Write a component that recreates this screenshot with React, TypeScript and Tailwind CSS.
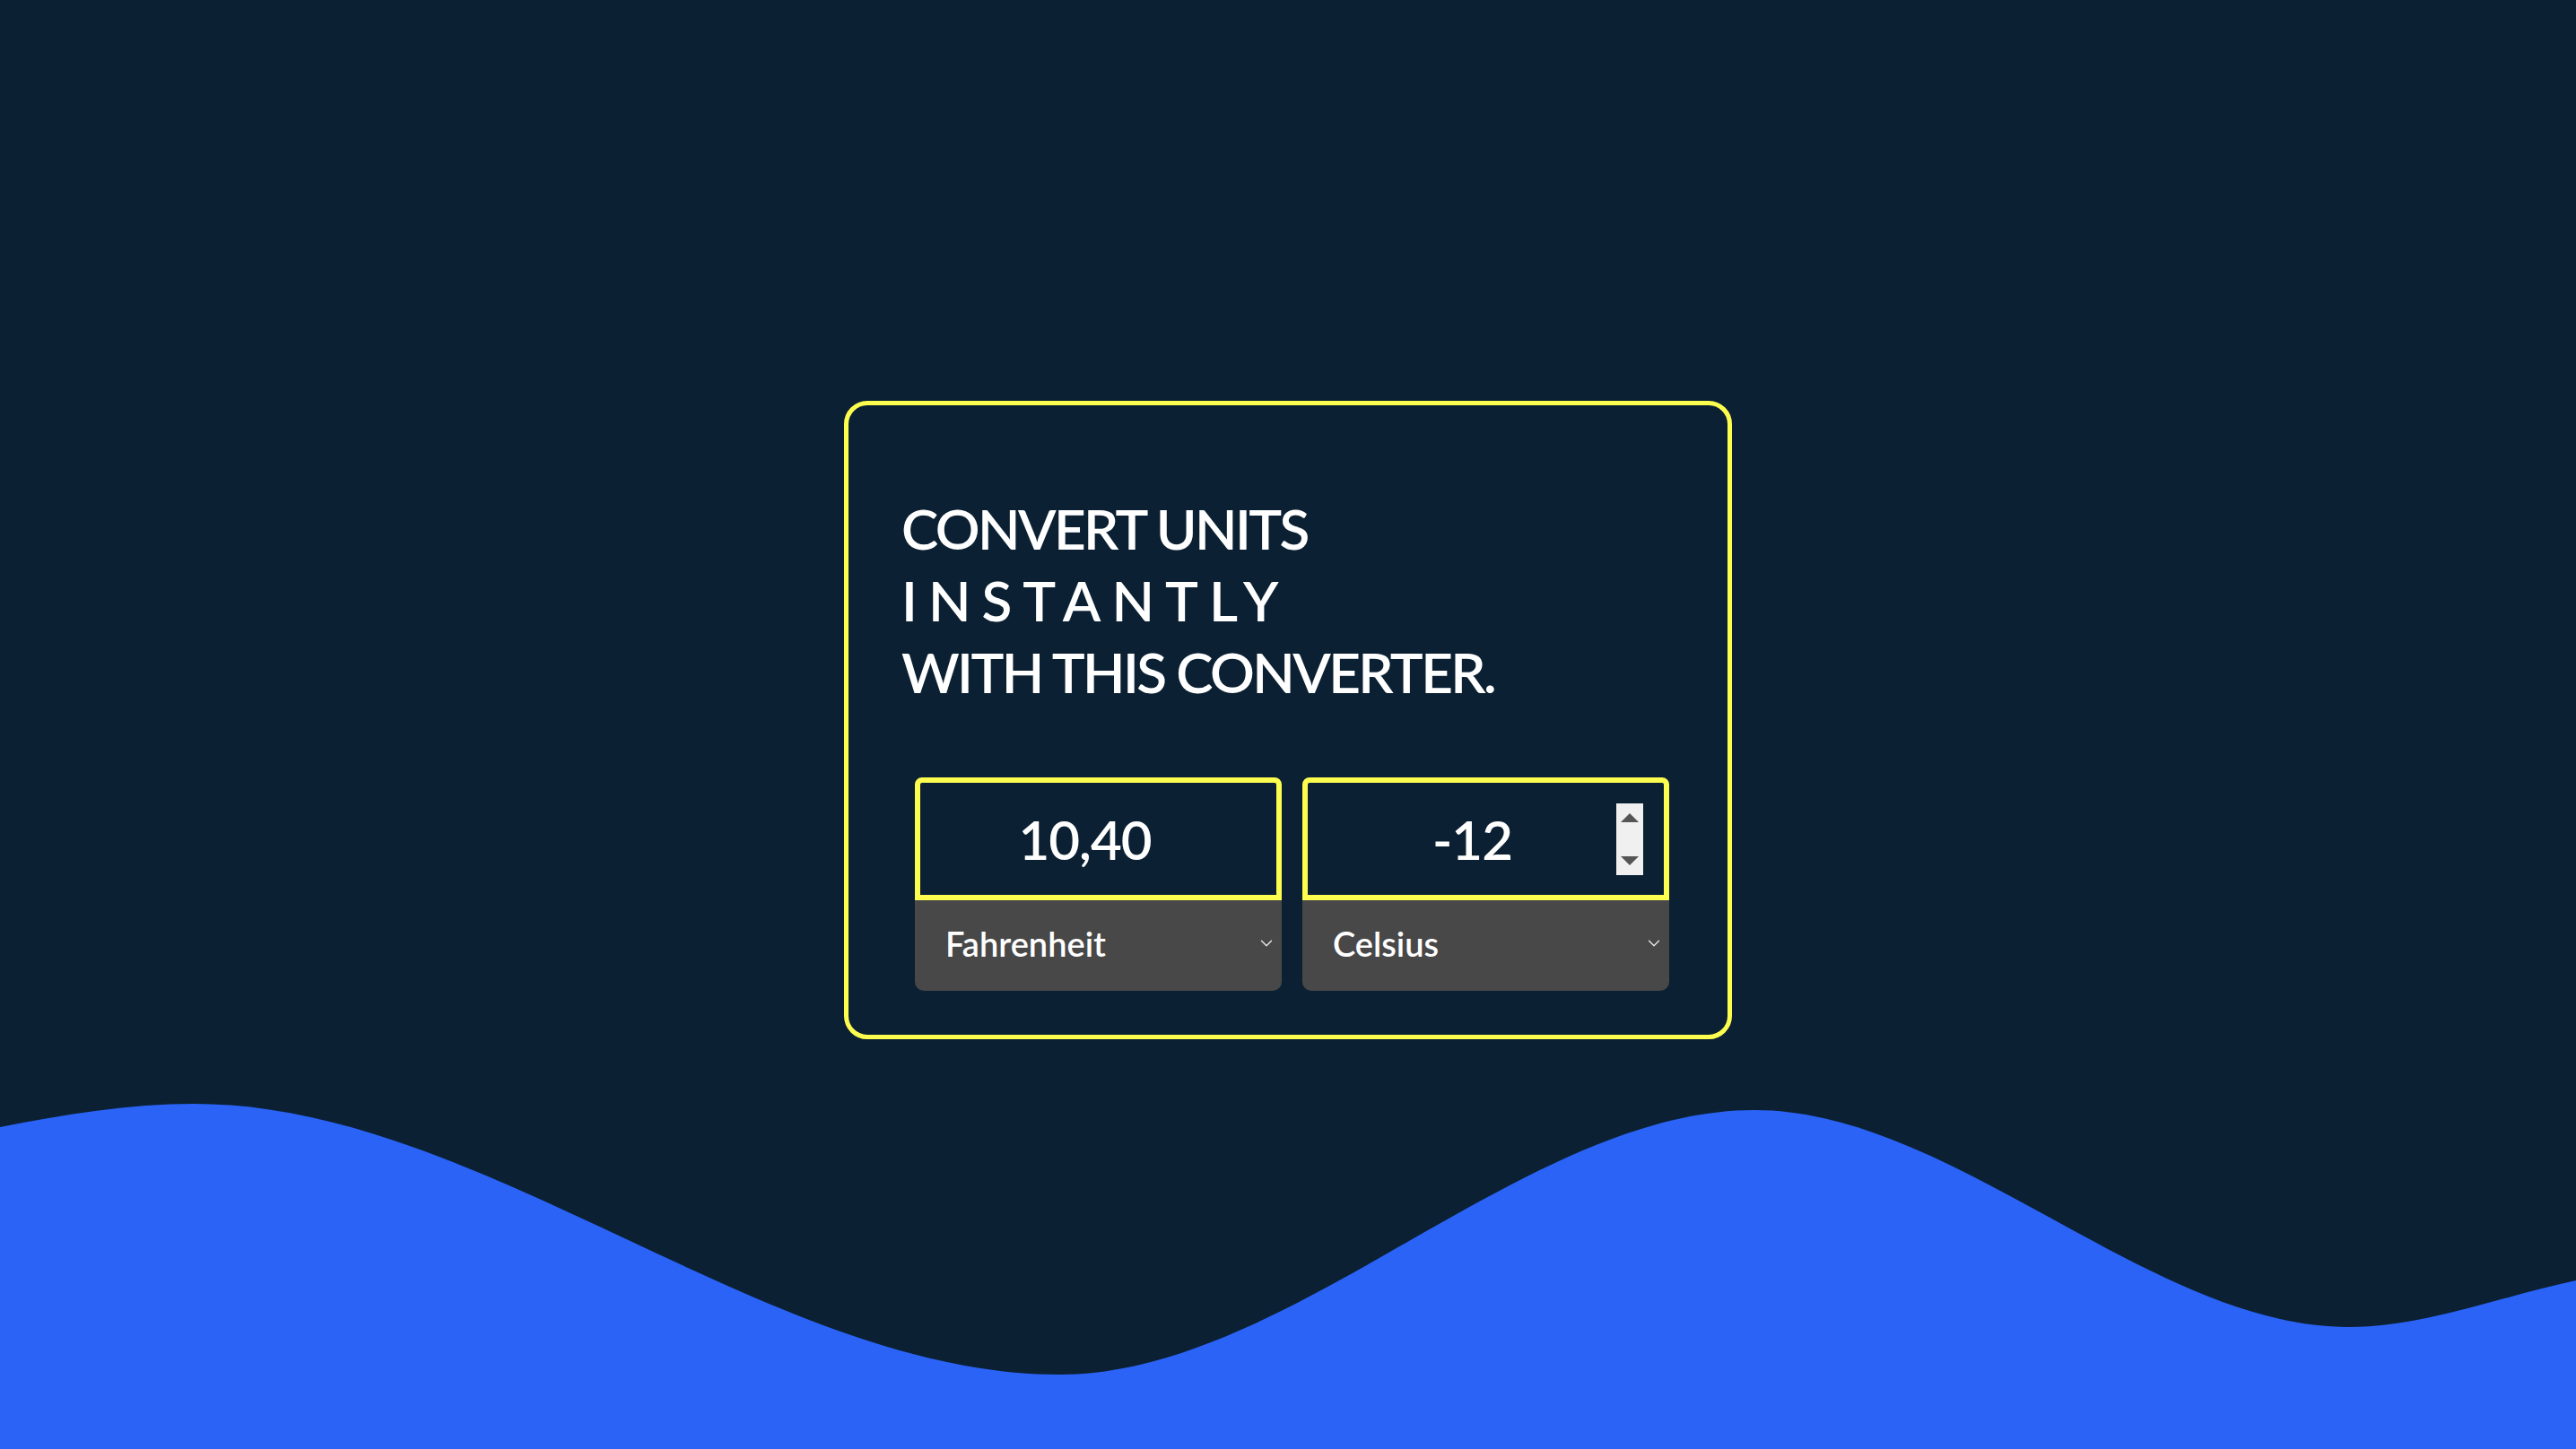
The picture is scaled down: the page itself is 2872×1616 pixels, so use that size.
import { ChevronDown } from "lucide-react";

const font = { fontFamily: "Lato, 'Noto Sans', sans-serif" };

function Wave() {
  return (
    <svg
      className="absolute bottom-0 left-0 w-full h-[385px]"
      viewBox="0 0 2872 385"
      preserveAspectRatio="none"
    >
      <path
        fill="#2a63f6"
        d="M0,26 C72,12 144,0 216,0 C538,0 859,302 1181,302 C1439,302 1698,7 1956,7 C2177,7 2398,249 2619,249 C2703,249 2787,215 2872,197 L2872,385 L0,385 Z"
      />
    </svg>
  );
}

function Spinner() {
  return (
    <div className="absolute right-[23px] top-[23px] w-[30px] h-[80px] bg-[#f0f0f0] flex flex-col items-center justify-between py-[11px]">
      <span className="w-0 h-0 border-l-[10px] border-r-[10px] border-b-[10px] border-l-transparent border-r-transparent border-b-[#555]" />
      <span className="w-0 h-0 border-l-[10px] border-r-[10px] border-t-[10px] border-l-transparent border-r-transparent border-t-[#555]" />
    </div>
  );
}

function Field({ value, unit, spin }: { value: string; unit: string; spin?: boolean }) {
  return (
    <div className="w-[409px] flex flex-col">
      <div className="relative h-[137px] border-[6px] border-[#fdfd4f] rounded-t-[8px] flex items-center justify-center pr-[30px] text-white text-[60px] tracking-[-1px]">
        {value}
        {spin && <Spinner />}
      </div>
      <div className="h-[101px] bg-[#484848] rounded-b-[10px] flex items-center justify-between pl-[34px] pr-[6px] text-white text-[38px]">
        <span className="-mt-[4px]">{unit}</span>
        <ChevronDown size={22} strokeWidth={1.5} className="text-[#e8e8e8] -mt-[6px]" />
      </div>
    </div>
  );
}

export default function App() {
  return (
    <div className="relative h-[1616px] w-full overflow-hidden bg-[#0b2032]" style={font}>
      <Wave />
      <div className="relative flex justify-center pt-[447px]">
        <div className="w-[990px] h-[712px] border-[5px] border-[#fdfd4f] rounded-[26px] pt-[97px] pl-[59px]">
          <h1 className="text-white font-semibold text-[62px] leading-[80px] tracking-[-2.6px]">
            <div>CONVERT UNITS</div>
            <div className="tracking-[12px]">INSTANTLY</div>
            <div>WITH THIS CONVERTER.</div>
          </h1>
          <div className="flex gap-[23px] mt-[78px] ml-[15px] font-semibold">
            <Field value="10,40" unit="Fahrenheit" />
            <Field value="-12" unit="Celsius" spin />
          </div>
        </div>
      </div>
    </div>
  );
}
